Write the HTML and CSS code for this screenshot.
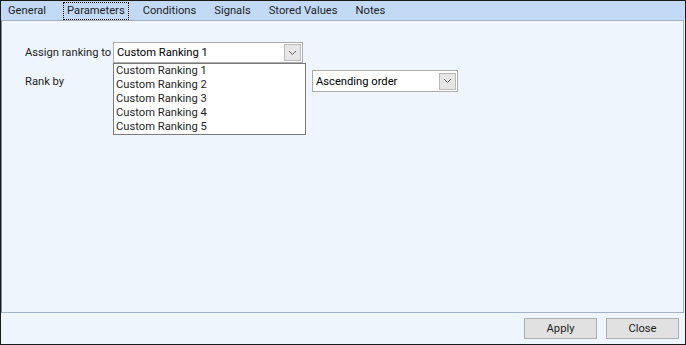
FILE: index.html
```html
<!DOCTYPE html>
<html lang="en">
<head>
    <meta charset="UTF-8">
    <title>Ranking Parameters</title>
    <link rel="stylesheet" href="styles.css">
</head>
<body>
    <div class="window">
        <!-- tab strip -->
        <div class="tabs">
            <div class="tab">General</div>
            <div class="tab active"><span class="focus">Parameters</span></div>
            <div class="tab">Conditions</div>
            <div class="tab">Signals</div>
            <div class="tab">Stored Values</div>
            <div class="tab">Notes</div>
        </div>

        <!-- tab page -->
        <div class="panel">
            <div class="form">
                <div class="label">Assign ranking to</div>
                <div class="fields">
                    <div class="select wide">
                        <span class="value">Custom Ranking 1</span>
                        <span class="arrow"><svg width="9" height="6" viewBox="0 0 9 6"><path d="M1 1 L4.5 4.5 L8 1" fill="none" stroke="#606060" stroke-width="1"/></svg></span>
                    </div>
                    <ul class="dropdown">
                        <li>Custom Ranking 1</li>
                        <li>Custom Ranking 2</li>
                        <li>Custom Ranking 3</li>
                        <li>Custom Ranking 4</li>
                        <li>Custom Ranking 5</li>
                    </ul>
                </div>

                <div class="label">Rank by</div>
                <div class="fields">
                    <div class="select wide tall">
                        <span class="value"></span>
                        <span class="arrow"></span>
                    </div>
                    <div class="select order tall">
                        <span class="value">Ascending order</span>
                        <span class="arrow"><svg width="9" height="6" viewBox="0 0 9 6"><path d="M1 1 L4.5 4.5 L8 1" fill="none" stroke="#606060" stroke-width="1"/></svg></span>
                    </div>
                </div>
            </div>
        </div>

        <!-- buttons -->
        <div class="footer">
            <button class="btn">Apply</button>
            <button class="btn">Close</button>
        </div>
    </div>
</body>
</html>
```

FILE: styles.css
```css
/* window */
body {
    margin: 0;
    font-family: Roboto, "Liberation Sans", Arial, sans-serif;
    font-size: 11.2px;
    color: #000;
    background: #fff;
}

.window {
    box-sizing: border-box;
    width: 686px;
    height: 345px;
    border: 1px solid #1a1a1a;
    background: #eef5fd;
    display: flex;
    flex-direction: column;
}

/* tabs */
.tabs {
    height: 19px;
    display: flex;
    align-items: stretch;
    background: #c2daf6;
}

.tab {
    display: flex;
    align-items: center;
    padding: 0 9px 0 9px;
    color: #1e1e1e;
    white-space: nowrap;
}

.tab:first-child {
    padding: 0 11px 0 7px;
}

.tab.active {
    padding: 0 5px 0 6px;
}

.tab .focus {
    border: 1px dotted #000;
    padding: 1px 3px 1px 3px;
    line-height: 14px;
}

/* page */
.panel {
    flex: 1;
    border: 1px solid #a3b3c4;
    border-left-color: #7f8fa0;
    margin-right: 1px;
    background: #eef5fd;
}

.form {
    display: grid;
    grid-template-columns: 88px auto;
    row-gap: 7px;
    padding: 21px 0 0 23px;
}

.label {
    display: flex;
    align-items: center;
    color: #1e1e1e;
    white-space: nowrap;
}

.fields {
    position: relative;
    display: flex;
    gap: 9px;
}

.select {
    box-sizing: border-box;
    height: 21px;
    display: flex;
    align-items: center;
    justify-content: space-between;
    background: #fff;
    border: 1px solid #acacac;
    padding: 0 1px 0 3px;
}

.select.tall {
    height: 22px;
}

.select.wide {
    width: 190px;
}

.select.order {
    width: 146px;
}

.arrow {
    box-sizing: border-box;
    width: 17px;
    height: 17px;
    display: flex;
    align-items: center;
    justify-content: center;
    background: #e6e6e6;
    border: 1px solid #b9b9b9;
}

.arrow svg {
    display: block;
}

/* open list */
.dropdown {
    position: absolute;
    top: 21px;
    left: 0;
    z-index: 2;
    box-sizing: border-box;
    width: 193px;
    margin: 0;
    padding: 0;
    list-style: none;
    background: #fff;
    border: 1px solid #7a7a7a;
}

.dropdown li {
    height: 14px;
    line-height: 14px;
    padding-left: 2px;
    color: #1e1e1e;
}

/* footer */
.footer {
    height: 31px;
    display: flex;
    justify-content: flex-end;
    align-items: flex-start;
    gap: 9px;
    padding: 5px 6px 0 0;
    box-sizing: border-box;
}

.btn {
    box-sizing: border-box;
    width: 73px;
    height: 21px;
    background: #e1e1e1;
    border: 1px solid #adadad;
    font-family: Roboto, "Liberation Sans", Arial, sans-serif;
    font-size: 11.2px;
    color: #1e1e1e;
    padding: 0;
}
```
